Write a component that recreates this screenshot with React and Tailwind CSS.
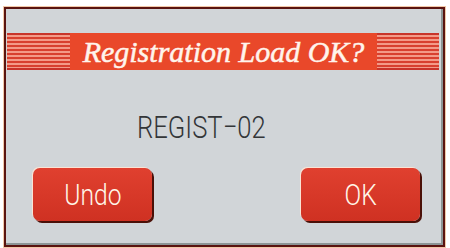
import React from 'react';

function Stripes({ className }) {
  return (
    <div
      className={`h-full border-y-2 border-[#c8342a] bg-[repeating-linear-gradient(to_bottom,#f39a88_0px,#f39a88_2px,#d8402f_2px,#d8402f_4px)] ${className}`}
    />
  );
}

function Button({ children }) {
  return (
    <button className="w-[119px] h-[53px] rounded-[7px] bg-gradient-to-b from-[#e0402f] to-[#cf3122] shadow-[2px_2px_0_#4a1008,-1px_-1px_0_#fbe3d4] flex items-center justify-center">
      <span className="inline-block scale-x-[0.82] text-[30px] leading-[30px] font-light text-[#fff6e8] font-['Roboto',sans-serif]">
        {children}
      </span>
    </button>
  );
}

export default function App() {
  return (
    <div className="w-[450px] h-[248px] bg-white pt-[7px] pl-[4px] overflow-hidden">
      <div className="w-[441px] h-[240px] border-2 border-[#5a1410] bg-[#d1d5d8] shadow-[0_0_0_1px_#f2c8a8,inset_-2px_-2px_0_#8d9596] flex flex-col">
        {/* title bar */}
        <div className="mt-[24px] ml-[1px] mr-[4px] h-[37px] flex">
          <Stripes className="w-[63px]" />
          <div className="flex-1 h-full bg-[#e9482a] flex items-center justify-center">
            <span className="text-[30px] leading-none italic text-[#fff4ec] [-webkit-text-stroke:0.5px_#fff4ec] font-['Liberation_Serif',serif]">
              Registration Load OK?
            </span>
          </div>
          <Stripes className="w-[62px]" />
        </div>

        {/* message */}
        <div className="mt-[41px] pl-[131px]">
          <span className="inline-block origin-left scale-x-[0.8] text-[32px] leading-[32px] font-light text-[#333638] font-['Roboto',sans-serif]">
            REGIST−02
          </span>
        </div>

        {/* buttons */}
        <div className="mt-[24px] pl-[27px] pr-[23px] flex justify-between">
          <Button>Undo</Button>
          <Button>OK</Button>
        </div>
      </div>
    </div>
  );
}
